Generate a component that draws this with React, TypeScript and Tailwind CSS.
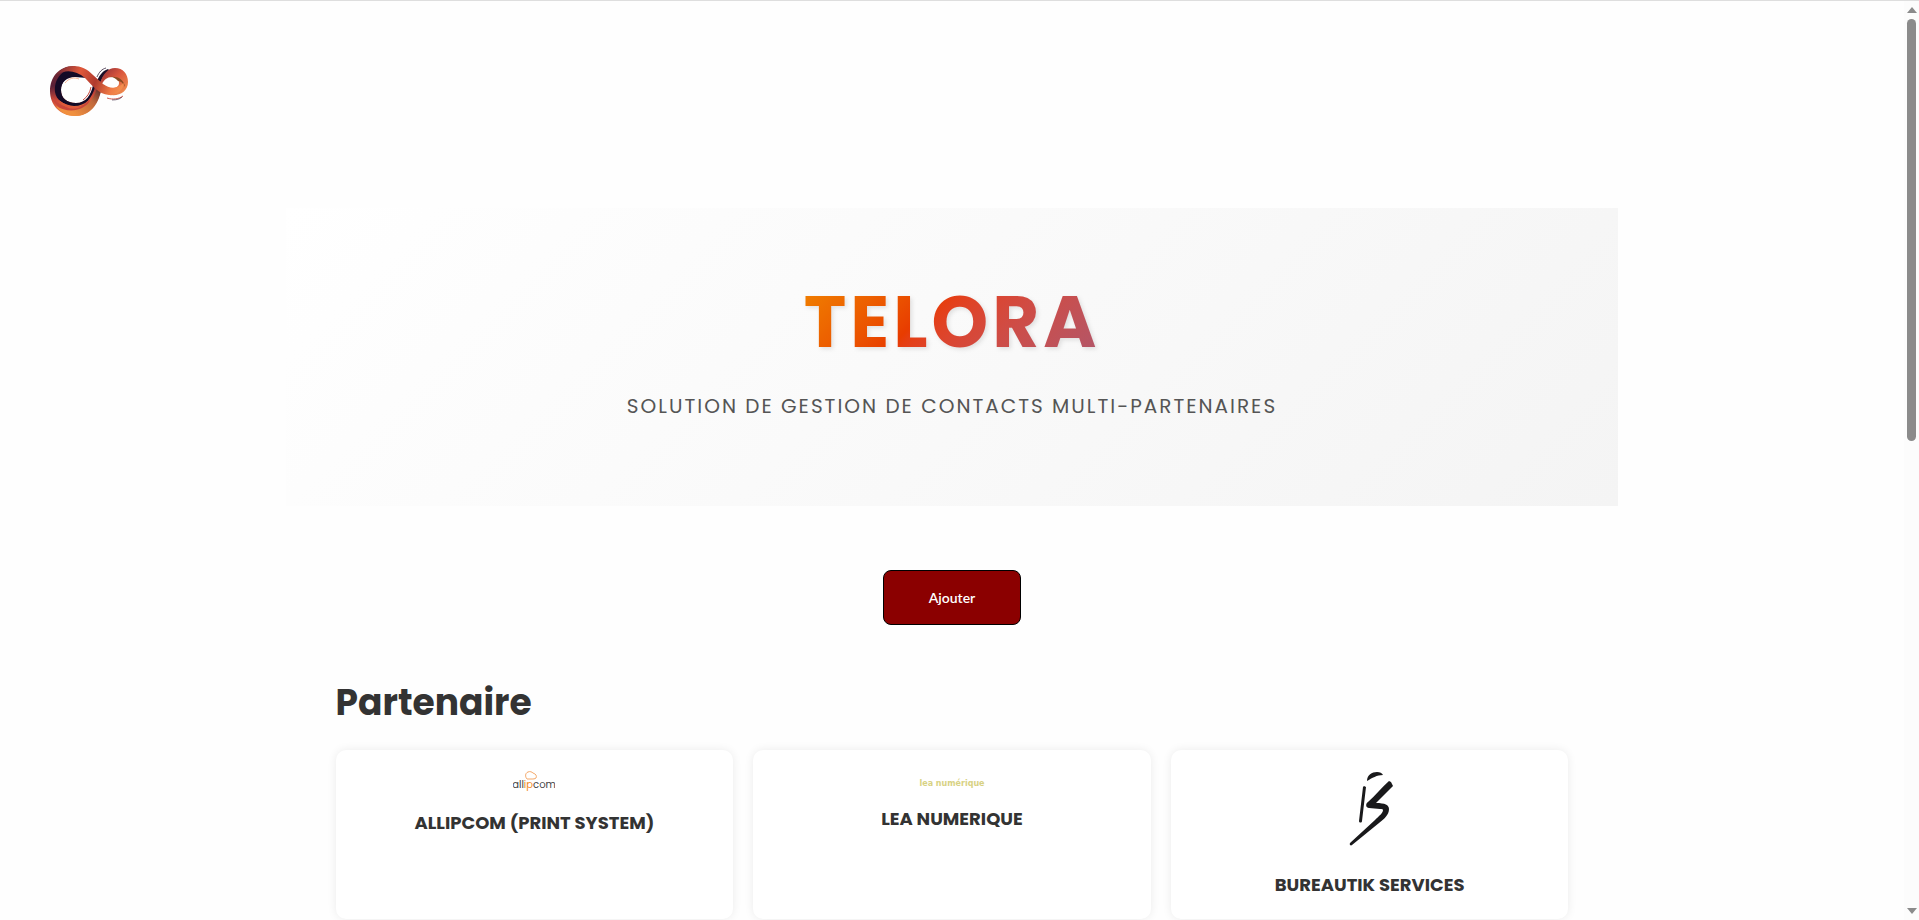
import type { ReactNode } from "react";

function TeloraLogo() {
  return (
    <svg viewBox="20 14 80 54" className="h-[54px] w-20" role="img" aria-label="Telora">
      <defs>
        <linearGradient id="ring" x1="0" y1="0" x2="0.15" y2="1">
          <stop offset="0" stopColor="#7a2a30" />
          <stop offset="0.4" stopColor="#5a2038" />
          <stop offset="0.7" stopColor="#d04a38" />
          <stop offset="1" stopColor="#f0853f" />
        </linearGradient>
        <linearGradient id="band" gradientUnits="userSpaceOnUse" x1="28" y1="20" x2="94" y2="46">
          <stop offset="0" stopColor="#7a2a34" />
          <stop offset="0.3" stopColor="#e0583a" />
          <stop offset="0.55" stopColor="#b03a2e" />
          <stop offset="0.8" stopColor="#ef7a45" />
          <stop offset="1" stopColor="#f59a52" />
        </linearGradient>
        <linearGradient id="loop" x1="0" y1="0" x2="1" y2="1">
          <stop offset="0" stopColor="#8a2a36" />
          <stop offset="0.45" stopColor="#d9553c" />
          <stop offset="1" stopColor="#f59a52" />
        </linearGradient>
        <linearGradient id="stem" gradientUnits="userSpaceOnUse" x1="44" y1="64" x2="70" y2="38">
          <stop offset="0" stopColor="#f0903f" />
          <stop offset="0.6" stopColor="#c0683c" />
          <stop offset="1" stopColor="#5a2a2c" />
        </linearGradient>
      </defs>
      <path fill="url(#ring)" d="M44 16C29 16 20 27 20 41s10 25 25 25c12 0 19-8 23-17l3-8-6-5c-3 10-9 17-19 17-9 0-15-5-15-13s6-14 14-14l9-6z" />
      <path fill="#140a26" d="M45 19C31 19 24 30 25 42c1 8 9 13 19 14 12 0 18-8 21-19l-2-2c-2 10-7 18-17 18-9 0-15-5-15-13s6-13 14-13l12 1z" />
      <path fill="#c9463a" d="M22 46c5 8 13 12 22 11 7 0 12-3 16-8-2 9-9 13-17 13-11 0-19-7-21-16z" />
      <path fill="url(#stem)" d="M26 56c8 5 18 6 26 2 8-4 12-11 15-20l4 3c-3 14-11 25-26 25-8 0-15-4-19-10z" />
      <path fill="#e05a3c" d="M29 50c7 6 15 8 23 6-7 5-18 3-23-6z" />
      <path fill="#1c0f28" d="M66 33c3-7 6-12 12-14l2 2c-5 2-8 7-10 13z" />
      <path fill="url(#loop)" d="M70 33c3-9 8-15 15-15 8 0 13 6 13 14 0 9-8 14-17 13l-1-7c5 1 9-1 9-5s-3-6-7-6c-5 0-8 3-10 7z" />
      <path fill="#8a4a20" d="M80 27c7-1 14 2 15 10-2-4-4-6-7-6-2-2-4-4-8-4z" />
      <path fill="url(#band)" d="M26 25c9-12 26-12 37 0l10 9c7 5 14 5 21-1-1 8-8 13-15 12-11-1-17-10-24-17-9-8-20-9-29-3z" />
      <path fill="none" stroke="#f5a37c" strokeWidth="0.8" d="M35 33c4-5 9-6 14-4" />
      <path fill="none" stroke="#c9463a" strokeWidth="1" d="M61 37c-1 6-4 10-8 13" />
      <path fill="none" stroke="#32203a" strokeWidth="0.8" d="M67 27c2-5 5-8 9-9" />
      <path fill="none" stroke="#c9463a" strokeWidth="0.9" d="M77 48c6 2 12 1 16-2" />
      <path fill="none" stroke="#32203a" strokeWidth="0.6" d="M82 50c5 0 8-1 10-3" />
    </svg>
  );
}

function AllipcomLogo() {
  return (
    <svg viewBox="0 0 42 22" className="h-[22px] w-[42px]" role="img" aria-label="allipcom">
      <path fill="none" stroke="#f5a868" strokeWidth="1" d="M14 9c-2-2-2-6 1-7 2-1 4 0 5 1 3 1 4 3 3 5-1 1-3 1-4 1h-5z" />
      <text x="21" y="18" textAnchor="middle" fontFamily="Poppins, sans-serif" fontSize="10" fill="#444">
        all<tspan fill="#f28c28">ip</tspan>com
      </text>
    </svg>
  );
}

function LeaLogo() {
  return (
    <svg viewBox="0 0 68 18" className="h-[18px] w-[68px]" role="img" aria-label="lea numérique">
      <text x="34" y="16" textAnchor="middle" fontFamily="DejaVu Sans, sans-serif" fontSize="8" fontWeight="700" fill="#d8d284">
        lea numérique
      </text>
    </svg>
  );
}

function BureautikLogo() {
  return (
    <svg viewBox="0 0 80 84" className="h-[84px] w-20" role="img" aria-label="Bureautik Services">
      <g fill="#19191b">
        <path d="M37 11c0-6 5-9 10-9 3 0 5 1 6 3-6 0-11 3-16 6z" />
        <path d="M34 16l2 1-4 34c0 2-3 2-3 0l4-34z" />
        <path d="M59 11l2 1 2 4-17 17c9 0 13 2 13 6 0 6-5 10-10 14L22 75c-1 1-3 0-2-2l25-23c4-4 8-7 8-10 0-1-1-1-3-1l-11-1c-3 0-4-4-1-6 7-6 14-15 21-21z" />
      </g>
    </svg>
  );
}

function PartnerCard({ name, logo }: { name: string; logo: ReactNode }) {
  return (
    <article className="flex flex-col items-center gap-[17px] rounded-[10px] bg-white p-5 shadow-[0_0_10px_rgba(0,0,0,0.08)]">
      {logo}
      <h3 className="text-center text-lg font-bold leading-7">{name}</h3>
    </article>
  );
}

function ScrollTrack() {
  return (
    <div aria-hidden="true" className="flex w-[15px] shrink-0 flex-col items-center bg-[#fcfcfc] py-1.5">
      <svg viewBox="0 0 10 6" className="h-1.5 w-2.5" fill="#8b8b8b"><path d="M5 0l5 6H0z" /></svg>
      <div className="mt-1.5 h-[46.5%] w-[9px] rounded-full bg-[#8b8b8b]" />
      <svg viewBox="0 0 10 6" className="mt-auto h-1.5 w-2.5" fill="#8b8b8b"><path d="M0 0h10L5 6z" /></svg>
    </div>
  );
}

export default function App() {
  return (
    <div className="flex h-screen overflow-hidden border-t border-[#dedede] bg-[#fefefe] font-[Poppins,Inter,sans-serif] text-[#333]">
      <div className="min-w-0 flex-1">
        <header className="px-[50px] pt-[63px] pb-[90px]">
          <a href="/" className="inline-block align-top"><TeloraLogo /></a>
        </header>
        <main className="mx-auto w-[70%]">
          <section className="bg-linear-135 from-white to-[#f4f4f4] px-5 pt-[78px] pb-[84px] text-center">
            <h1 className="mx-auto w-fit bg-linear-135 from-[#f08000] via-[#e83c00] via-40% to-[#b0566a] bg-clip-text text-[72px] font-bold leading-[72px] tracking-[4px] text-transparent drop-shadow-[2px_2px_2px_rgba(0,0,0,0.1)]">
              TELORA
            </h1>
            <p className="mt-8 text-xl font-normal leading-8 tracking-[2px] text-[#555]">
              SOLUTION DE GESTION DE CONTACTS MULTI-PARTENAIRES
            </p>
          </section>
          <div className="flex justify-center pt-16 pb-[50px]">
            <button type="button" className="rounded-lg border border-black bg-[#8b0000] px-[45px] py-4 font-[Lato,sans-serif] text-sm font-semibold leading-[21px] text-white">
              Ajouter
            </button>
          </div>
          <section className="px-[50px]">
            <h2 className="text-4xl font-bold leading-[56px]">Partenaire</h2>
            <div className="mt-[19px] grid grid-cols-3 gap-5">
              <PartnerCard name="ALLIPCOM (PRINT SYSTEM)" logo={<AllipcomLogo />} />
              <PartnerCard name="LEA NUMERIQUE" logo={<LeaLogo />} />
              <PartnerCard name="BUREAUTIK SERVICES" logo={<BureautikLogo />} />
            </div>
          </section>
        </main>
      </div>
      <ScrollTrack />
    </div>
  );
}
